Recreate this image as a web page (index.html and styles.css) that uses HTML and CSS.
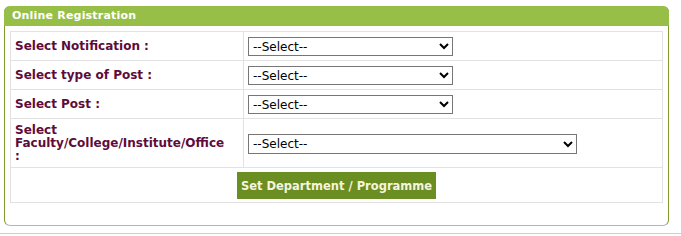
FILE: index.html
```html
<!DOCTYPE html>
<html lang="en">
<head>
    <meta charset="UTF-8">
    <meta name="viewport" content="width=device-width, initial-scale=1.0">
    <title>Online Registration</title>
    <link rel="stylesheet" href="styles.css">
</head>
<body>

    <div class="panel">
        <div class="panel-head">Online Registration</div>

        <div class="panel-body">
            <!-- Formulaire de selection -->
            <table class="reg-table">
                <tr>
                    <td class="label">Select Notification :</td>
                    <td>
                        <select class="sel">
                            <option>--Select--</option>
                        </select>
                    </td>
                </tr>
                <tr>
                    <td class="label">Select type of Post :</td>
                    <td>
                        <select class="sel">
                            <option>--Select--</option>
                        </select>
                    </td>
                </tr>
                <tr>
                    <td class="label">Select Post :</td>
                    <td>
                        <select class="sel">
                            <option>--Select--</option>
                        </select>
                    </td>
                </tr>
                <tr>
                    <td class="label">Select Faculty/College/Institute/Office :</td>
                    <td>
                        <select class="sel sel-wide">
                            <option>--Select--</option>
                        </select>
                    </td>
                </tr>
                <tr>
                    <td colspan="2" class="actions">
                        <button class="btn-set">Set Department / Programme</button>
                    </td>
                </tr>
            </table>
        </div>
    </div>

    <div class="rule"></div>

</body>
</html>
```

FILE: styles.css
```css
body {
    font-family: 'DejaVu Sans', Verdana, sans-serif;
    background-color: #ffffff;
    margin: 0;
    padding: 6px 12px 0 4px;
}

.panel {
    border-left: 1px solid #7e9a2c;
    border-right: 1px solid #7e9a2c;
    border-bottom: 1px solid #b5b5b5;
    border-radius: 6px 6px 6px 6px;
    background-color: #ffffff;
}

.panel-head {
    background-color: #97bf47;
    color: #ffffff;
    font-size: 11px;
    font-weight: bold;
    letter-spacing: 0.2px;
    height: 20px;
    line-height: 20px;
    padding-left: 8px;
    margin: 0 -1px;
    border-radius: 6px 6px 0 0;
}

.panel-body {
    padding: 5px 5px 22px 5px;
}

.reg-table {
    width: 100%;
    border-collapse: collapse;
    table-layout: fixed;
}

.reg-table td {
    border: 1px solid #e2e2e2;
    padding: 5px 4px 4px 4px;
    vertical-align: middle;
}

td.label {
    width: 213px;
    padding-right: 15px;
    color: #5e0b3a;
    font-size: 12px;
    font-weight: bold;
    line-height: 13px;
}

.sel {
    width: 205px;
    height: 19px;
    font-family: 'DejaVu Sans', Verdana, sans-serif;
    font-size: 12px;
    color: #000000;
    border: 1px solid #767676;
    border-radius: 0;
    background-color: #ffffff;
    padding: 0;
    display: block;
}

.sel-wide {
    width: 329px;
    height: 20px;
}

td.actions {
    text-align: center;
    padding: 4px 4px 3px 4px;
}

.btn-set {
    background-color: #6b8e23;
    color: #f5f5dc;
    font-family: 'DejaVu Sans', Verdana, sans-serif;
    font-size: 11.5px;
    font-weight: bold;
    border: none;
    height: 27px;
    padding: 0 4px;
    cursor: pointer;
}

.btn-set:hover {
    opacity: 0.8;
}

.rule {
    border-top: 1px solid #cccccc;
    margin: 7px -12px 0 -4px;
}
```
